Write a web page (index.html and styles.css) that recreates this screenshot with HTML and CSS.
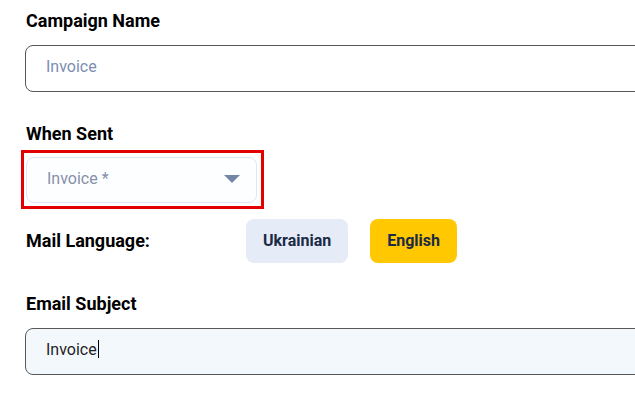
FILE: index.html
```html
<html>
  <head>
    <meta charset="utf-8">
    <title>Campaign settings</title>
    <link rel="stylesheet" href="styles.css">
  </head>
  <body>
    <div class="campaign-form">
      <div class="form-group">
        <label class="form-label">Campaign Name</label>
        <div class="text-field placeholder">Invoice</div>
      </div>

      <div class="form-group when-sent">
        <label class="form-label">When Sent</label>
        <div class="highlight-box">
          <div class="select-field">
            <span class="select-value">Invoice *</span>
            <svg class="select-arrow" width="16" height="8" viewBox="0 0 16 8">
              <path d="M0 0 L16 0 L8 8 Z" fill="#7486a8"/>
            </svg>
          </div>
        </div>
      </div>

      <div class="language-row">
        <span class="form-label">Mail Language:</span>
        <div class="language-options">
          <button class="lang-button">Ukrainian</button>
          <button class="lang-button active">English</button>
        </div>
      </div>

      <div class="form-group subject">
        <label class="form-label">Email Subject</label>
        <div class="text-field filled">Invoice<span class="caret"></span></div>
      </div>
    </div>
  </body>
</html>
```

FILE: styles.css
```css
body {
  margin: 0;
  padding: 0;
  background: #fff;
  font-family: Roboto, "Liberation Sans", Arial, sans-serif;
  overflow: hidden;
}
.campaign-form {
  padding: 11px 0 0 25px;
  width: 660px;
}
.form-label {
  display: block;
  font-size: 18px;
  line-height: 20px;
  font-weight: bold;
  color: #000;
  margin: 0 0 14px 1px;
}
.text-field {
  box-sizing: border-box;
  height: 47px;
  border: 1px solid #585858;
  border-radius: 8px;
  padding: 0 20px 5px;
  display: flex;
  align-items: center;
  font-size: 16px;
  color: #1e1e1e;
}
.text-field.placeholder {
  color: #7b8db3;
}
.text-field.filled {
  background: #f3f8fd;
}
.caret {
  display: inline-block;
  width: 1px;
  height: 18px;
  background: #000;
  margin-left: 1px;
}
.when-sent {
  margin-top: 32px;
}
.when-sent .form-label {
  margin-bottom: 6px;
}
.highlight-box {
  display: inline-block;
  margin-left: -4px;
  border: 3px solid #e30000;
  padding: 4px 4px 3px 2px;
}
.select-field {
  box-sizing: border-box;
  width: 231px;
  height: 46px;
  border: 1px solid #dfe6f2;
  border-radius: 8px;
  background: #fdfeff;
  padding: 0 16px 3px 20px;
  display: flex;
  align-items: center;
  justify-content: space-between;
  font-size: 16px;
  color: #8590aa;
}
.language-row {
  display: flex;
  align-items: center;
  margin-top: 10px;
}
.language-row .form-label {
  margin: 0 0 0 1px;
  width: 220px;
}
.language-options {
  display: flex;
  gap: 22px;
}
.lang-button {
  height: 44px;
  padding: 0 17px 2px;
  border: none;
  border-radius: 8px;
  background: #e5ebf7;
  color: #1b2a45;
  font-family: inherit;
  font-size: 16px;
  font-weight: bold;
  cursor: pointer;
}
.lang-button.active {
  background: #ffc800;
}
.subject {
  margin-top: 31px;
}
```
